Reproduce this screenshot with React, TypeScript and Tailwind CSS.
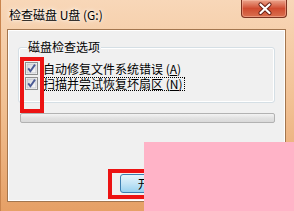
import React from 'react';

function CheckBox() {
  return (
    <svg width="13" height="13" viewBox="0 0 13 13" className="shrink-0">
      <defs>
        <linearGradient id="cbg" x1="0" y1="0" x2="1" y2="1">
          <stop offset="0" stopColor="#d4d6da" />
          <stop offset="1" stopColor="#fbfbfb" />
        </linearGradient>
      </defs>
      <rect x="0.5" y="0.5" width="12" height="12" fill="#fff" stroke="#8e8f8f" />
      <rect x="2" y="2" width="9" height="9" fill="url(#cbg)" stroke="#b9bcc2" strokeWidth="0.8" />
      <path d="M3.2 6.4 L5.4 9.2 L10 2.6" fill="none" stroke="#4a5a94" strokeWidth="1.9" />
    </svg>
  );
}

function CloseGlyph() {
  return (
    <svg width="46" height="18" viewBox="0 0 46 18">
      <path d="M18.5 4.5 L27.5 13 M27.5 4.5 L18.5 13" stroke="#6b2216" strokeWidth="4.2" strokeLinecap="round" />
      <path d="M18.5 4.5 L27.5 13 M27.5 4.5 L18.5 13" stroke="#ffffff" strokeWidth="2.2" strokeLinecap="round" />
    </svg>
  );
}

export default function App() {
  return (
    <div className="relative w-[294px] h-[211px] overflow-hidden border-l border-[#c9844d] bg-gradient-to-b from-[#f8d7b8] via-[#f1c092] to-[#e6a066] font-['Noto_Sans_CJK_SC','Noto_Sans',sans-serif] text-[12px] text-black">
      {/* 标题栏 */}
      <div className="flex h-[29px] items-start">
        <div className="pl-[8px] pt-[6px] leading-[18px] [text-shadow:0_0_6px_#fff,0_0_3px_#fff]">
          检查磁盘 U盘 (G:)
        </div>
        <div className="ml-auto mr-[7px] h-[18px] w-[46px] rounded-b-[4px] border border-t-0 border-[#7c3321] bg-gradient-to-b from-[#eaa48c] via-[#cf4b30] to-[#d9704f] shadow-[inset_0_0_0_1px_rgba(255,200,180,0.45)]">
          <CloseGlyph />
        </div>
      </div>

      {/* 内容区 */}
      <div className="ml-[6px] mr-[8px] h-[173px] border border-[#a3764f] bg-[#f0f0f0] shadow-[inset_0_0_0_1px_#ffffff]">
        <div className="flex flex-col">
          {/* 磁盘检查选项 */}
          <div className="relative ml-[10px] mt-[17px] h-[56px] w-[257px] rounded-[3px] border border-[#d5dfe5] pl-[6px] pt-[13px] shadow-[inset_0_0_0_1px_#fff]">
            <div className="absolute left-[8px] top-[-9px] bg-[#f0f0f0] px-[1px] leading-[16px]">
              磁盘检查选项
            </div>
            <div className="flex h-[15px] items-center">
              <CheckBox />
              <span className="ml-[5px] leading-[14px]">
                自动修复文件系统错误 (<u>A</u>)
              </span>
            </div>
            <div className="flex h-[15px] items-center">
              <CheckBox />
              <span className="ml-[3px] border border-dotted border-black px-[1px] leading-[12px]">
                扫描并尝试恢复坏扇区 (<u>N</u>)
              </span>
            </div>
          </div>

          {/* 进度条 */}
          <div className="ml-[12px] mt-[10px] h-[10px] w-[255px] rounded-[2px] border border-[#b2b2b2] bg-gradient-to-b from-[#f3f3f3] via-[#e2e2e2] to-[#d9d9d9]" />

          {/* 开始按钮 */}
          <div className="ml-[112px] mt-[51px] flex h-[19px] w-[75px] items-center justify-center rounded-[3px] border border-[#3c7fb1] bg-gradient-to-b from-[#e5f4fc] via-[#c4e5f6] to-[#98d1ef] leading-[14px]">
            开始(<u>S</u>)
          </div>
        </div>
      </div>

      {/* 标注 */}
      <div className="absolute left-[19px] top-[57px] h-[56px] w-[24px] border-[4px] border-[#ec1313]" />
      <div className="absolute left-[107px] top-[169px] h-[30px] w-[60px] border-[4px] border-[#ec1313]" />
      <div className="absolute left-[143px] top-[142px] bottom-0 right-0 bg-[#ffb3c7]" />
    </div>
  );
}
